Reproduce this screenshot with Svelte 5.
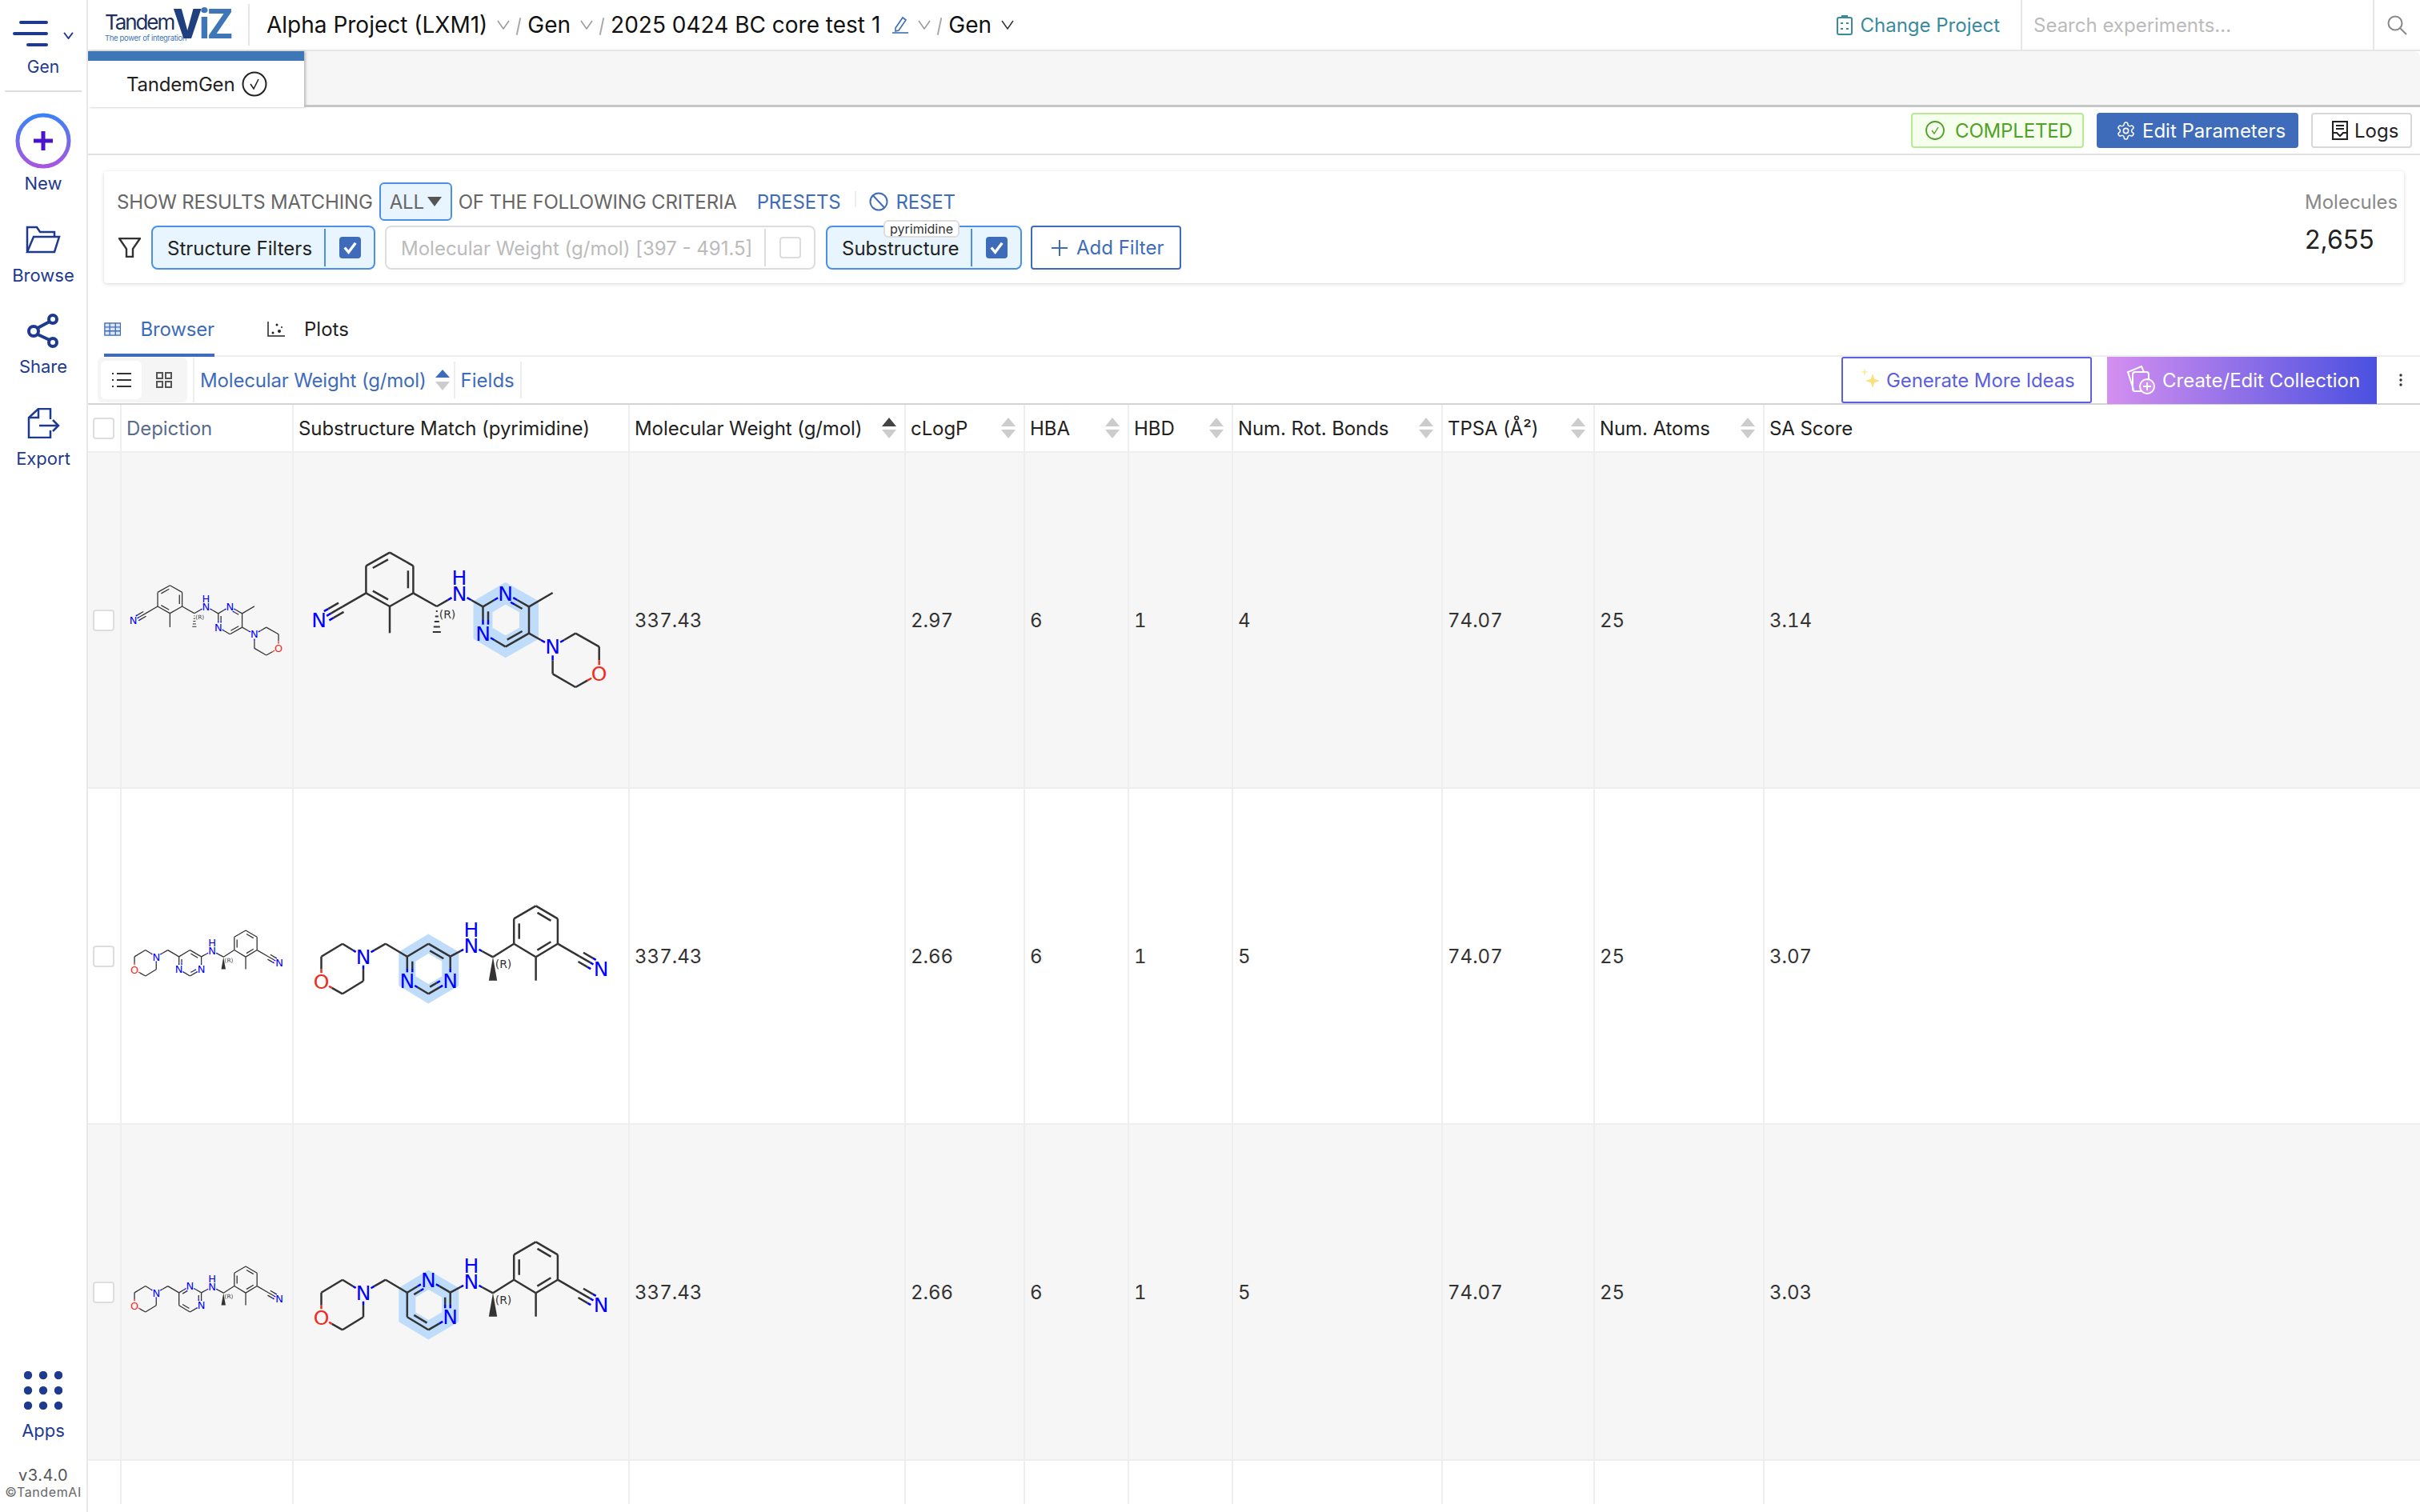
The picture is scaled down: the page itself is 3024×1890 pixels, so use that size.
<script>
    const COL = {C: "#333", N: "#0000ff", O: "#ee2c1f"};

    // split a bond in two colours when it joins different elements
    function bondSegs(a, b, off = [0, 0], shrink = 0) {
        let ax = a[0] + off[0], ay = a[1] + off[1], bx = b[0] + off[0], by = b[1] + off[1];
        const len = Math.hypot(bx - ax, by - ay);
        const ux = (bx - ax) / len, uy = (by - ay) / len;
        const trimA = Math.max(a[2] ? 11 : 0, shrink), trimB = Math.max(b[2] ? 11 : 0, shrink);
        ax += ux * trimA; ay += uy * trimA; bx -= ux * trimB; by -= uy * trimB;
        const ca = COL[a[2] || "C"], cb = COL[b[2] || "C"];
        if (ca === cb) return [{x1: ax, y1: ay, x2: bx, y2: by, c: ca}];
        const mx = (a[0] + b[0]) / 2 + off[0], my = (a[1] + b[1]) / 2 + off[1];
        return [{x1: ax, y1: ay, x2: mx, y2: my, c: ca}, {x1: mx, y1: my, x2: bx, y2: by, c: cb}];
    }

    function lines(atoms, bonds) {
        const out = [];
        for (const [i, j, order, cx, cy] of bonds) {
            const a = atoms[i], b = atoms[j];
            out.push(...bondSegs(a, b));
            const len = Math.hypot(b[0] - a[0], b[1] - a[1]);
            let nx = -(b[1] - a[1]) / len * 6.5, ny = (b[0] - a[0]) / len * 6.5;
            if (order === 2) {
                // inner line goes towards the ring centre
                if ((cx - a[0]) * nx + (cy - a[1]) * ny < 0) { nx = -nx; ny = -ny; }
                out.push(...bondSegs(a, b, [nx, ny], 6));
            }
            if (order === 3) {
                out.push(...bondSegs(a, b, [nx, ny], 2));
                out.push(...bondSegs(a, b, [-nx, -ny], 2));
            }
        }
        return out;
    }

    function firstMol() {
        const atoms = [
            [357, 30.7], [386.4, 47.3], [386.4, 81.3], [357, 98], [327.4, 81.3], [327.4, 47.3],
            [357, 131.3], [298, 98.3], [268.6, 115.3, "N"], [415.8, 98], [444, 81.7, "N"],
            [473.5, 98.3], [501.7, 81.7, "N"], [531, 98.3], [531, 131.7], [501.7, 148.3], [473.5, 131.7, "N"],
            [560.6, 81], [560.6, 148.3, "N"], [589.2, 131.7], [618.7, 148.3], [618.7, 182.3, "O"], [589.2, 199], [560.6, 182.3],
        ];
        const bc = [357, 64.5], rc = [502.3, 115];
        const bonds = [
            [0, 1], [1, 2, 2, ...bc], [2, 3], [3, 4, 2, ...bc], [4, 5], [5, 0, 2, ...bc],
            [3, 6], [4, 7], [7, 8, 3], [2, 9], [9, 10], [10, 11],
            [11, 12], [12, 13, 2, ...rc], [13, 14], [14, 15, 2, ...rc], [15, 16], [16, 11, 2, ...rc],
            [13, 17], [14, 18], [18, 19], [19, 20], [20, 21], [21, 22], [22, 23], [23, 18],
        ];
        return {
            box: "256 10 380 210",
            atoms,
            segs: lines(atoms, bonds),
            ring: [11, 12, 13, 14, 15, 16].map(i => atoms[i].slice(0, 2).join(",")).join(" "),
            ringW: 24,
            nh: atoms[10],
            hash: [415.8, 98, 131.3],
            r: [429, 108],
        };
    }

    function otherMol(els, dbl) {
        const atoms = [
            [271.5, 118.3, "O"], [271.5, 86.7], [298, 70.7], [324, 86.7, "N"], [324, 117.3], [298, 133.3],
            [351.9, 70.7],
            [378.8, 86.7, els[0]], [405.3, 70.7, els[1]], [432.7, 86.7, els[2]], [432.7, 117.3, els[3]], [405.3, 133.3, els[4]], [378.8, 117.3, els[5]],
            [458.8, 72.7, "N"], [486, 87.3],
            [512.2, 70.7], [512.2, 39.3], [539.6, 23.3], [566.9, 39.3], [566.9, 70.7], [539.6, 87.3],
            [539.6, 116.7], [594, 86.4], [621, 102, "N"],
        ];
        const bc = [539.6, 55.3], rc = [405.7, 102];
        const ringBonds = [[7, 8], [8, 9], [9, 10], [10, 11], [11, 12], [12, 7]]
            .map((b, i) => dbl.includes(i) ? [...b, 2, ...rc] : b);
        const bonds = [
            [0, 1], [1, 2], [2, 3], [3, 4], [4, 5], [5, 0], [3, 6], [6, 7],
            ...ringBonds,
            [9, 13], [13, 14], [14, 15],
            [15, 16, 2, ...bc], [16, 17], [17, 18, 2, ...bc], [18, 19], [19, 20, 2, ...bc], [20, 15],
            [20, 21], [19, 22], [22, 23, 3],
        ];
        return {
            box: "256 -19 380 210",
            atoms,
            segs: lines(atoms, bonds),
            ring: [7, 8, 9, 10, 11, 12].map(i => atoms[i].slice(0, 2).join(",")).join(" "),
            ringW: 21,
            nh: atoms[13],
            wedge: "486,87.3 480.8,116.7 491.2,116.7",
            r: [499, 96],
        };
    }

    const rows = [
        {mol: firstMol(), vals: ["337.43", "2.97", "6", "1", "4", "74.07", "25", "3.14"]},
        {mol: otherMol([null, null, null, "N", null, "N"], [1, 3, 5]), vals: ["337.43", "2.66", "6", "1", "5", "74.07", "25", "3.07"]},
        {mol: otherMol([null, "N", null, "N", null, null], [0, 2, 4]), vals: ["337.43", "2.66", "6", "1", "5", "74.07", "25", "3.03"]},
    ];

    const fields = ["Molecular Weight (g/mol)", "cLogP", "HBA", "HBD", "Num. Rot. Bonds", "TPSA (Å²)", "Num. Atoms", "SA Score"];
</script>

{#snippet mol(m, size)}
    <svg class={size} viewBox={m.box}>
        {#if size === "large"}
            <polygon points={m.ring} fill="none" stroke="#bfdcfb" stroke-width={m.ringW} stroke-linejoin="miter"/>
        {/if}
        {#each m.segs as s}
            <line x1={s.x1} y1={s.y1} x2={s.x2} y2={s.y2} stroke={s.c} stroke-width="2.5"/>
        {/each}
        {#if m.hash}
            {#each [0, 1, 2, 3, 4] as i}
                <line x1={m.hash[0] - 1 - i} x2={m.hash[0] + 1 + i} y1={m.hash[1] + 6 + i * 6.5} y2={m.hash[1] + 6 + i * 6.5} stroke="#333" stroke-width="2"/>
            {/each}
        {/if}
        {#if m.wedge}
            <polygon points={m.wedge} fill="#333"/>
        {/if}
        {#each m.atoms.filter(a => a[2]) as a}
            <text class="atom" x={a[0]} y={a[1] + 9} fill={COL[a[2]]}>{a[2]}</text>
        {/each}
        <text class="atom" x={m.nh[0]} y={m.nh[1] - 11} fill={COL.N}>H</text>
        <text class="chiral" x={m.r[0]} y={m.r[1] + 5}>(R)</text>
    </svg>
{/snippet}

{#snippet sorter(active)}
    <svg class="sorter" viewBox="0 0 18 26">
        <polygon points="9,0 18,11 0,11" fill={active ? "#444" : "#ccc"}/>
        <polygon points="9,26 18,15 0,15" fill="#ccc"/>
    </svg>
{/snippet}

{#snippet chev(dark)}
    <svg class="chev" viewBox="0 0 16 12"><polyline points="1,1 8,11 15,1" fill="none" stroke={dark ? "#333" : "#999"} stroke-width="1.5"/></svg>
{/snippet}

{#snippet tick()}
    <span class="check on">
        <svg viewBox="0 0 28 28"><polyline points="7,14 12,20 21,8" fill="none" stroke="#fff" stroke-width="3.5"/></svg>
    </span>
{/snippet}

<div class="page">
    <nav class="side">
        <div class="menu">
            <div class="burger">
                <svg viewBox="0 0 44 32" width="44" height="32">
                    <g stroke="#1e3a8f" stroke-width="4" stroke-linecap="round">
                        <line x1="10" y1="2" x2="42" y2="2"/>
                        <line x1="2" y1="16" x2="42" y2="16"/>
                        <line x1="19" y1="30" x2="42" y2="30"/>
                    </g>
                </svg>
                <svg class="burger-chev" viewBox="0 0 14 10" width="13" height="9"><polyline points="1,1 7,9 13,1" fill="none" stroke="#1e3a8f" stroke-width="2"/></svg>
            </div>
            <span>Gen</span>
        </div>
        <div class="side-item new">
            <svg viewBox="0 0 70 70" width="70" height="70">
                <defs>
                    <linearGradient id="ring" x1="0" y1="0" x2="0" y2="1">
                        <stop offset="0" stop-color="#3b82f6"/>
                        <stop offset="1" stop-color="#a855e0"/>
                    </linearGradient>
                </defs>
                <circle cx="35" cy="35" r="32" fill="none" stroke="url(#ring)" stroke-width="5"/>
                <path d="M35 23v24M23 35h24" stroke="#4a14cc" stroke-width="5" fill="none"/>
            </svg>
            <span>New</span>
        </div>
        <div class="side-item browse">
            <svg viewBox="0 0 44 35" width="44" height="35" fill="none" stroke="#1e3a8f" stroke-width="2.5">
                <path d="M2 32V2h12l4 6h18v6"/>
                <path d="M10 14h32l-6 19H2z"/>
            </svg>
            <span>Browse</span>
        </div>
        <div class="side-item share">
            <svg viewBox="0 0 40 43" width="40" height="43" fill="none" stroke="#1e3a8f" stroke-width="4">
                <circle cx="32" cy="7" r="5"/>
                <circle cx="8" cy="22" r="6"/>
                <circle cx="32" cy="36" r="5"/>
                <path d="M13 18l15-8M13 26l15 7"/>
            </svg>
            <span>Share</span>
        </div>
        <div class="side-item export">
            <svg viewBox="0 0 41 38" width="41" height="38" fill="none" stroke="#1e3a8f" stroke-width="2.5">
                <path d="M29 14V1H14L2 12v25h27V28"/>
                <path d="M14 1v11H2"/>
                <path d="M15 22h24M32 15l7 7-7 7"/>
            </svg>
            <span>Export</span>
        </div>
        <div class="bottom">
            <svg viewBox="0 0 48 48" width="48" height="48" fill="#1e3a8f">
                {#each [5, 24, 43] as y}
                    {#each [5, 24, 43] as x}
                        <circle cx={x} cy={y} r="5.2"/>
                    {/each}
                {/each}
            </svg>
            <span class="apps">Apps</span>
            <span class="ver">v3.4.0</span>
            <span class="copy">©TandemAI</span>
        </div>
    </nav>

    <main>
        <header>
            <div class="logo">
                <div class="logo-left">
                    <span class="tandem">Tandem</span>
                    <span class="power">The power of integration</span>
                </div>
                <span class="viz"><b>V</b>iZ</span>
            </div>
            <div class="crumbs">
                <span>Alpha Project (LXM1)</span>{@render chev(false)}<i></i>
                <span>Gen</span>{@render chev(false)}<i></i>
                <span class="exp">2025 0424 BC core test 1</span>
                <svg class="pencil" viewBox="0 0 22 22" fill="none" stroke="#3e6cba" stroke-width="1.6">
                    <path d="M5 15L14 2l4 3-9 13-4 1z"/>
                    <path d="M1 21h20"/>
                </svg>
                {@render chev(false)}<i></i>
                <span>Gen</span>{@render chev(true)}
            </div>
            <div class="change">
                <svg viewBox="0 0 20 26" width="20" height="26" fill="none" stroke="#3a8a9e" stroke-width="2">
                    <rect x="1" y="4" width="18" height="21" rx="2"/>
                    <path d="M7 4V2h6v2M5 11h3M12 11h3M5 18h3M12 18h3"/>
                </svg>
                <span>Change Project</span>
            </div>
            <div class="search"><span>Search experiments...</span></div>
            <div class="lens">
                <svg viewBox="0 0 25 25" width="25" height="25" fill="none" stroke="#888" stroke-width="2">
                    <circle cx="10" cy="10" r="8.5"/>
                    <path d="M16 16l8 8"/>
                </svg>
            </div>
        </header>

        <div class="strip">
            <div class="gen-tab">
                <span>TandemGen</span>
                <svg viewBox="0 0 32 32" width="32" height="32" fill="none" stroke="#222" stroke-width="2">
                    <circle cx="16" cy="16" r="14.5"/>
                    <polyline points="11,16 15,22 21,10" stroke-width="1.6"/>
                </svg>
            </div>
        </div>

        <div class="actions">
            <div class="status">
                <svg viewBox="0 0 24 24" width="24" height="24" fill="none" stroke="#52a02a" stroke-width="1.8">
                    <circle cx="12" cy="12" r="11"/>
                    <polyline points="8,12 11,16 16,8" stroke-width="1.4"/>
                </svg>
                <span>COMPLETED</span>
            </div>
            <div class="edit">
                <svg viewBox="0 0 24 24" width="25" height="25" fill="none" stroke="#fff" stroke-width="1.5">
                    <path d="M12.22 2h-.44a2 2 0 0 0-2 2v.18a2 2 0 0 1-1 1.73l-.43.25a2 2 0 0 1-2 0l-.15-.08a2 2 0 0 0-2.73.73l-.22.38a2 2 0 0 0 .73 2.73l.15.1a2 2 0 0 1 1 1.72v.51a2 2 0 0 1-1 1.74l-.15.09a2 2 0 0 0-.73 2.73l.22.38a2 2 0 0 0 2.73.73l.15-.08a2 2 0 0 1 2 0l.43.25a2 2 0 0 1 1 1.73V20a2 2 0 0 0 2 2h.44a2 2 0 0 0 2-2v-.18a2 2 0 0 1 1-1.73l.43-.25a2 2 0 0 1 2 0l.15.08a2 2 0 0 0 2.73-.73l.22-.39a2 2 0 0 0-.73-2.73l-.15-.08a2 2 0 0 1-1-1.74v-.5a2 2 0 0 1 1-1.74l.15-.09a2 2 0 0 0 .73-2.73l-.22-.38a2 2 0 0 0-2.73-.73l-.15.08a2 2 0 0 1-2 0l-.43-.25a2 2 0 0 1-1-1.73V4a2 2 0 0 0-2-2z"/>
                    <circle cx="12" cy="12" r="3"/>
                </svg>
                <span>Edit Parameters</span>
            </div>
            <div class="logs">
                <svg viewBox="0 0 20 24" width="20" height="24" fill="none" stroke="#222" stroke-width="2.2">
                    <rect x="1" y="1" width="18" height="22"/>
                    <path d="M5 6h10M5 10h10M1 15h5l4 4 4-4h5"/>
                </svg>
                <span>Logs</span>
            </div>
        </div>

        <section class="card">
            <div class="card-left">
                <div class="match">
                    <span>SHOW RESULTS MATCHING</span>
                    <div class="select">ALL<svg viewBox="0 0 18 12" width="18" height="12"><polygon points="0,0 18,0 9,12" fill="#555"/></svg></div>
                    <span>OF THE FOLLOWING CRITERIA</span>
                    <span class="link presets">PRESETS</span>
                    <i class="sep"></i>
                    <svg class="ban" viewBox="0 0 24 24" width="24" height="24" fill="none" stroke="#3e6cba" stroke-width="2">
                        <circle cx="12" cy="12" r="10.5"/>
                        <path d="M5 4.5l14 15"/>
                    </svg>
                    <span class="link">RESET</span>
                </div>
                <div class="chips">
                    <svg class="funnel" viewBox="0 0 28 25" width="28" height="25" fill="none" stroke="#333" stroke-width="2.4">
                        <path d="M1 1h26L18 14v10h-8V14z"/>
                    </svg>
                    <div class="chip active struct">
                        <span class="chip-text">Structure Filters</span>
                        <span class="chip-box">{@render tick()}</span>
                    </div>
                    <div class="chip off mw">
                        <span class="chip-text">Molecular Weight (g/mol) [397 - 491.5]</span>
                        <span class="chip-box"><span class="check"></span></span>
                    </div>
                    <div class="chip active sub">
                        <span class="hint">pyrimidine</span>
                        <span class="chip-text">Substructure</span>
                        <span class="chip-box">{@render tick()}</span>
                    </div>
                    <div class="add">
                        <svg viewBox="0 0 20 20" width="20" height="20" stroke="#3e6cba" stroke-width="2"><path d="M10 0v20M0 10h20"/></svg>
                        <span>Add Filter</span>
                    </div>
                </div>
            </div>
            <div class="count">
                <span class="count-label">Molecules</span>
                <span class="count-num">2,655</span>
            </div>
        </section>

        <div class="tabs">
            <div class="tab current">
                <svg viewBox="0 0 24 19" width="24" height="19" fill="#dce8f6" stroke="#3e6cba" stroke-width="1.5">
                    <rect x="1" y="1" width="22" height="17"/>
                    <path d="M8 1v17M16 1v17M1 6.5h22M1 12h22" fill="none"/>
                </svg>
                <span>Browser</span>
            </div>
            <div class="tab">
                <svg viewBox="0 0 22 19" width="22" height="19" fill="#222">
                    <path d="M1 0v18h21" fill="none" stroke="#222" stroke-width="1.5"/>
                    <circle cx="7" cy="14" r="1.5"/><circle cx="12" cy="4" r="1.5"/><circle cx="15" cy="12" r="2"/><circle cx="18" cy="7" r="1"/>
                </svg>
                <span>Plots</span>
            </div>
        </div>

        <div class="toolbar">
            <div class="seg">
                <span class="seg-btn active">
                    <svg viewBox="0 0 24 20" width="24" height="20" stroke="#333" stroke-width="2">
                        <path d="M6 2h18M6 10h18M6 18h18"/>
                        <path d="M0 2h2M0 10h2M0 18h2"/>
                    </svg>
                </span>
                <span class="seg-btn">
                    <svg viewBox="0 0 20 20" width="20" height="20" fill="none" stroke="#555" stroke-width="2">
                        <rect x="1" y="1" width="7" height="7"/><rect x="12" y="1" width="7" height="7"/>
                        <rect x="1" y="12" width="7" height="7"/><rect x="12" y="12" width="7" height="7"/>
                    </svg>
                </span>
            </div>
            <div class="sort-by">
                <span>Molecular Weight (g/mol)</span>
                <svg viewBox="0 0 18 26" width="18" height="26">
                    <polygon points="9,0 18,10 0,10" fill="#3e6cba"/>
                    <polygon points="9,26 18,15 0,15" fill="#ccc"/>
                </svg>
            </div>
            <div class="fields"><span>Fields</span></div>
            <div class="more">
                <svg viewBox="0 0 24 30" width="24" height="30" fill="#fbdf7a">
                    <path d="M15 7l2.2 6.8L24 16l-6.8 2.2L15 25l-2.2-6.8L6 16l6.8-2.2z"/>
                    <path d="M5 0l1 4 4 1-4 1-1 4-1-4-4-1 4-1z" opacity=".7"/>
                </svg>
                <span>Generate More Ideas</span>
            </div>
            <div class="collect">
                <svg viewBox="0 0 38 36" width="38" height="36" fill="none" stroke="#fff" stroke-width="2">
                    <path d="M10 30L3 8 20 1l3 7"/>
                    <rect x="9" y="8" width="20" height="24" rx="3"/>
                    <circle cx="27" cy="26" r="9" fill="#d090ee"/>
                    <path d="M27 21v10M22 26h10"/>
                </svg>
                <span>Create/Edit Collection</span>
            </div>
            <svg class="kebab" viewBox="0 0 4 16" width="4" height="16" fill="#333">
                <circle cx="2" cy="2" r="1.7"/><circle cx="2" cy="8" r="1.7"/><circle cx="2" cy="14" r="1.7"/>
            </svg>
        </div>

        <div class="table">
            <div class="tr head">
                <div class="td"><span class="check"></span></div>
                <div class="td depiction">Depiction</div>
                <div class="td">Substructure Match (pyrimidine)</div>
                {#each fields as f, i}
                    <div class="td">
                        <span>{f}</span>
                        {#if i < fields.length - 1}{@render sorter(i === 0)}{/if}
                    </div>
                {/each}
            </div>
            {#each rows as row, r}
                <div class="tr body" class:shade={r % 2 === 0}>
                    <div class="td"><span class="check"></span></div>
                    <div class="td pic">{@render mol(row.mol, "small")}</div>
                    <div class="td pic">{@render mol(row.mol, "large")}</div>
                    {#each row.vals as v}
                        <div class="td">{v}</div>
                    {/each}
                </div>
            {/each}
            <div class="tr tail">
                {#each Array(11) as _}
                    <div class="td"></div>
                {/each}
            </div>
        </div>
    </main>
</div>

<style>
    :global(body) {
        margin: 0;
        background: #fff;
    }

    .page {
        display: flex;
        height: 100vh;
        overflow: hidden;
        font-family: Inter, "Liberation Sans", sans-serif;
        font-size: 24px;
        color: #222;
    }

    /* sidebar */
    .side {
        width: 108px;
        flex: none;
        border-right: 2px solid #e8e8e8;
        display: flex;
        flex-direction: column;
        align-items: center;
        color: #1e3a8f;
        font-size: 22px;
    }

    .menu {
        width: 96px;
        height: 115px;
        box-sizing: border-box;
        padding-top: 26px;
        border-bottom: 2px solid #ddd;
        display: flex;
        flex-direction: column;
        align-items: center;
        flex: none;
    }

    .burger {
        display: flex;
        align-items: center;
        height: 32px;
        gap: 19px;
    }

    .burger-chev {
        margin-top: 5px;
    }

    .menu span {
        margin-top: 13px;
        font-size: 21px;
        line-height: 26px;
    }

    .side-item {
        display: flex;
        flex-direction: column;
        align-items: center;
    }

    .side-item span {
        line-height: 28px;
    }

    .new {
        margin-top: 26px;
    }

    .new span {
        margin-top: 4px;
    }

    .browse {
        margin-top: 39px;
    }

    .browse span {
        margin-top: 13px;
    }

    .share {
        margin-top: 34px;
    }

    .share span {
        margin-top: 9px;
    }

    .export {
        margin-top: 38px;
    }

    .export span {
        margin-top: 11px;
    }

    .bottom {
        margin-top: auto;
        display: flex;
        flex-direction: column;
        align-items: center;
        padding-bottom: 14px;
    }

    .apps {
        margin-top: 12px;
        line-height: 28px;
    }

    .ver {
        margin-top: 30px;
        color: #555;
        font-size: 20px;
        letter-spacing: 0.5px;
        line-height: 24px;
    }

    .copy {
        margin-top: -2px;
        color: #666;
        font-size: 16px;
        letter-spacing: 0.6px;
        line-height: 22px;
    }

    main {
        flex: 1;
        min-width: 0;
        display: flex;
        flex-direction: column;
    }

    /* header */
    header {
        height: 64px;
        box-sizing: border-box;
        flex: none;
        border-bottom: 2px solid #e6e6e6;
        display: flex;
        align-items: center;
    }

    .logo {
        display: flex;
        align-items: center;
        width: 157px;
        height: 52px;
        margin-left: 21px;
        padding-right: 22px;
        border-right: 2px solid #e6e6e6;
    }

    .logo-left {
        display: flex;
        flex-direction: column;
        width: 86px;
        flex: none;
        margin-top: 6px;
    }

    .tandem {
        font-size: 26px;
        line-height: 28px;
        letter-spacing: -2.1px;
        color: #1c2f5e;
    }

    .power {
        font-size: 9.5px;
        line-height: 12px;
        letter-spacing: -0.35px;
        color: #3e76b8;
        white-space: nowrap;
    }

    .viz {
        font-family: Roboto, sans-serif;
        font-weight: 700;
        font-size: 52px;
        line-height: 52px;
        letter-spacing: -3px;
        color: #3e76b8;
    }

    .viz b {
        color: #1f3f7f;
    }

    .crumbs {
        display: flex;
        align-items: center;
        margin-left: 21px;
        font-size: 28px;
        color: #111;
    }

    .crumbs i {
        display: block;
        width: 2px;
        height: 22px;
        margin: 4px 10px 0 10px;
        background: #aaa;
        transform: rotate(12deg);
    }

    .chev {
        width: 16px;
        height: 12px;
        margin-left: 12px;
    }

    .pencil {
        width: 22px;
        height: 22px;
        margin-left: 14px;
    }

    .pencil + .chev {
        margin-left: 11px;
    }

    .change {
        margin-left: auto;
        display: flex;
        align-items: center;
        gap: 9px;
        color: #3a8a9e;
    }

    .search {
        margin-left: 26px;
        width: 442px;
        height: 62px;
        box-sizing: border-box;
        padding-left: 14px;
        border-left: 2px solid #e6e6e6;
        border-right: 2px solid #e6e6e6;
        display: flex;
        align-items: center;
        color: #bbb;
    }

    .lens {
        width: 57px;
        display: flex;
        justify-content: center;
    }

    /* tab strip */
    .strip {
        height: 70px;
        flex: none;
        background: #f6f6f6;
        border-bottom: 3px solid #c6c6c6;
        border-top-right-radius: 8px;
        box-sizing: border-box;
    }

    .gen-tab {
        width: 270px;
        height: 70px;
        box-sizing: border-box;
        background: #fff;
        border-top: 12px solid #3f76b5;
        box-shadow: 2px 0 3px #bbb;
        display: flex;
        align-items: center;
        gap: 9px;
        padding-left: 48px;
        letter-spacing: -0.2px;
    }

    /* status row */
    .actions {
        height: 58px;
        flex: none;
        border-bottom: 2px solid #e0e0e0;
        display: flex;
        align-items: center;
        justify-content: flex-end;
        padding-right: 10px;
        gap: 16px;
    }

    .status,
    .edit,
    .logs {
        height: 44px;
        box-sizing: border-box;
        border-radius: 4px;
        display: flex;
        align-items: center;
    }

    .status {
        width: 216px;
        background: #f6ffed;
        border: 2px solid #b7eb8f;
        color: #52a02a;
        padding-left: 16px;
        gap: 13px;
        letter-spacing: -0.15px;
    }

    .edit {
        width: 252px;
        background: #3e6cba;
        color: #fff;
        padding-left: 24px;
        gap: 8px;
    }

    .logs {
        width: 126px;
        border: 2px solid #d8d8d8;
        padding-left: 24px;
        gap: 8px;
    }

    /* filter card */
    .card {
        height: 140px;
        flex: none;
        box-sizing: border-box;
        margin: 20px 20px 0;
        padding: 14px 0 0 16px;
        border-radius: 4px;
        box-shadow: 0 1px 5px rgba(0, 0, 0, 0.16);
        display: flex;
    }

    .card-left {
        flex: 1;
    }

    .match {
        display: flex;
        align-items: center;
        height: 48px;
        color: #666;
        letter-spacing: -0.15px;
    }

    .select {
        width: 91px;
        height: 48px;
        box-sizing: border-box;
        margin: 0 8px;
        padding-left: 11px;
        background: #e8f5ff;
        border: 2px solid #4a90e8;
        border-radius: 6px;
        display: flex;
        align-items: center;
        gap: 4px;
    }

    .link {
        color: #3e6cba;
    }

    .presets {
        margin-left: 25px;
    }

    .sep {
        width: 2px;
        height: 20px;
        margin: 0 16px 6px 17px;
        background: #eee;
    }

    .ban {
        margin-right: 10px;
    }

    .chips {
        display: flex;
        align-items: center;
        height: 55px;
        margin-top: 6px;
    }

    .funnel {
        margin: 0 13px 0 2px;
    }

    .chip {
        position: relative;
        height: 55px;
        box-sizing: border-box;
        border-radius: 8px;
        border: 2px solid #4a90e8;
        background: #e8f5fe;
        display: flex;
        align-items: center;
        justify-content: space-between;
        padding-left: 18px;
    }

    .chip-text {
        padding-top: 2px;
    }

    .chip.off {
        background: #fff;
        border-color: #ddd;
        color: #bbb;
    }

    .struct {
        width: 280px;
    }

    .mw {
        width: 538px;
        margin-left: 12px;
    }

    .sub {
        width: 245px;
        margin-left: 13px;
    }

    .chip-box {
        display: flex;
        align-items: center;
        justify-content: center;
        width: 60px;
        height: 47px;
        border-left: 2px solid #4a90e8;
    }

    .off .chip-box {
        border-left-color: #ddd;
    }

    .hint {
        position: absolute;
        left: 70px;
        top: -9px;
        height: 22px;
        box-sizing: border-box;
        padding: 0 6px;
        background: #fff;
        border: 2px solid #ddd;
        border-radius: 6px;
        font-size: 16px;
        line-height: 18px;
        color: #333;
    }

    .check {
        display: block;
        width: 27px;
        height: 27px;
        box-sizing: border-box;
        border: 2px solid #ddd;
        border-radius: 4px;
        background: #fff;
    }

    .check.on {
        background: #3e6cba;
        border: none;
    }

    .check svg {
        display: block;
    }

    .add {
        width: 188px;
        height: 55px;
        box-sizing: border-box;
        margin-left: 11px;
        border: 2px solid #3e6cba;
        border-radius: 4px;
        box-shadow: 0 3px 0 rgba(0, 0, 0, 0.03);
        display: flex;
        align-items: center;
        gap: 11px;
        padding-left: 24px;
        color: #3e6cba;
    }

    .count {
        width: 124px;
        flex: none;
        display: flex;
        flex-direction: column;
    }

    .count-label {
        margin-top: 10px;
        color: #888;
        line-height: 30px;
    }

    .count-num {
        margin-top: 12px;
        font-size: 32px;
        line-height: 40px;
    }

    /* browser / plots */
    .tabs {
        height: 70px;
        flex: none;
        box-sizing: border-box;
        margin: 22px 0 0 20px;
        border-bottom: 2px solid #eee;
        display: flex;
        gap: 66px;
    }

    .tab {
        height: 70px;
        box-sizing: border-box;
        padding-top: 4px;
        border-bottom: 4px solid transparent;
        display: flex;
        align-items: center;
        gap: 24px;
    }

    .tab.current {
        width: 138px;
        border-bottom-color: #3e6cba;
        color: #3e6cba;
        letter-spacing: -0.15px;
    }

    .toolbar {
        height: 58px;
        flex: none;
        display: flex;
        align-items: center;
        padding-left: 12px;
    }

    .seg {
        width: 112px;
        height: 56px;
        box-sizing: border-box;
        padding: 4px;
        border-radius: 6px;
        background: #f5f5f5;
        display: flex;
    }

    .seg-btn {
        width: 52px;
        height: 48px;
        border-radius: 6px;
        display: flex;
        align-items: center;
        justify-content: center;
    }

    .seg-btn.active {
        background: #fff;
    }

    .seg-btn + .seg-btn {
        margin-left: 2px;
    }

    .sort-by {
        margin-left: 7px;
        padding-left: 7px;
        height: 56px;
        box-sizing: border-box;
        border-left: 2px solid #eee;
        display: flex;
        align-items: center;
        gap: 11px;
        color: #3e6cba;
        letter-spacing: -0.16px;
    }

    .fields {
        margin-left: 5px;
        padding: 0 7px;
        height: 46px;
        border-left: 2px solid #eee;
        border-right: 2px solid #eee;
        display: flex;
        align-items: center;
        color: #3e6cba;
    }

    .more {
        margin-left: auto;
        width: 313px;
        height: 58px;
        box-sizing: border-box;
        border: 2px solid #5b5fe0;
        border-radius: 3px;
        display: flex;
        align-items: center;
        padding-left: 22px;
        gap: 8px;
        color: #5b5fe0;
        letter-spacing: -0.12px;
    }

    .collect {
        width: 337px;
        height: 59px;
        box-sizing: border-box;
        margin-left: 19px;
        background: linear-gradient(90deg, #d48ff0, #4a50e0);
        display: flex;
        align-items: center;
        padding-left: 23px;
        gap: 8px;
        color: #fff;
        position: relative;
    }

    .kebab {
        margin: 0 22px 0 28px;
    }

    /* table */
    .table {
        border-top: 2px solid #d4d4d4;
    }

    .tr {
        display: grid;
        grid-template-columns: 42px 215px 420px 345px 149px 130px 130px 262px 190px 212px 1fr;
        box-sizing: border-box;
        border-bottom: 2px solid #eee;
    }

    .head {
        height: 60px;
        letter-spacing: -0.08px;
    }

    .body {
        height: 420px;
        font-variant-numeric: tabular-nums;
    }

    .shade {
        background: #f6f6f6;
    }

    .tail {
        height: 54px;
        border-bottom: none;
    }

    .td {
        min-width: 0;
        box-sizing: border-box;
        border-right: 2px solid #eee;
        padding: 0 10px 0 6px;
        display: flex;
        align-items: center;
        justify-content: space-between;
        color: #333;
    }

    .td:last-child {
        border-right: none;
    }

    .head .td {
        color: #222;
        white-space: nowrap;
    }

    .td:first-child {
        padding: 0 0 0 6px;
    }

    .head .depiction {
        color: #5b6b8a;
    }

    .pic {
        padding: 0;
        justify-content: center;
    }

    .sorter {
        width: 18px;
        height: 26px;
        flex: none;
    }

    .small {
        width: 197px;
        height: 109px;
        flex: none;
    }

    .large {
        width: 380px;
        height: 210px;
        flex: none;
    }

    .atom {
        font-family: "DejaVu Sans", sans-serif;
        font-size: 25px;
        text-anchor: middle;
    }

    .chiral {
        font-family: "DejaVu Sans", sans-serif;
        font-size: 14px;
        text-anchor: middle;
        fill: #333;
    }
</style>
